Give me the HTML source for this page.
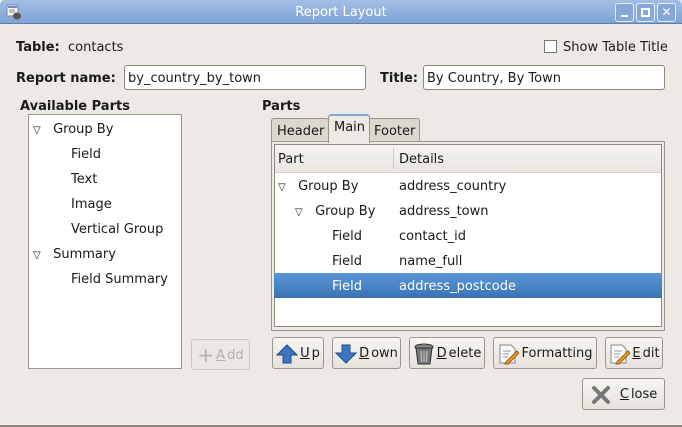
<!DOCTYPE html>
<html><head><meta charset="utf-8"><style>
*{box-sizing:border-box;margin:0;padding:0}
body{width:682px;height:427px;overflow:hidden;background:#edeae5;font-family:"DejaVu Sans","Liberation Sans",sans-serif;font-size:13px;color:#1a1a1a;position:relative}
.a{position:absolute;white-space:nowrap}
.tb{left:0;top:0;width:682px;height:24px;background:linear-gradient(#a2bfe6,#7fa3d6);border-bottom:1px solid #5f7fae;border-radius:5px 5px 0 0}
.b{font-weight:bold}
.t{font-size:10px}
.entry{background:#fff;border:1px solid #8d877c;border-radius:3px;height:25px;padding:5px 3px;line-height:15px}
.btn{border:1px solid #9b968c;border-radius:3px;background:linear-gradient(#f7f6f3,#e6e2dc);height:32px;display:flex;align-items:center;justify-content:center;gap:2px;padding-top:1px}
.btn u{text-decoration:underline}
.wb{width:19px;height:19px;border:1px solid #e5edf8;border-radius:3px;top:3px;background:#86a8d9}
</style></head><body>
<div class="a tb"></div>
<svg class="a" style="left:6px;top:4px" width="16" height="16"><rect x="1" y="1" width="11" height="11" fill="#f5f5f5" stroke="#7a8aa0"/><rect x="2" y="2" width="9" height="2" fill="#6b8fc4"/><line x1="3" y1="6" x2="9" y2="6" stroke="#888"/><line x1="3" y1="8" x2="9" y2="8" stroke="#888"/><ellipse cx="11" cy="12" rx="4" ry="3.5" fill="#555"/></svg>
<div class="a" style="left:0;width:682px;top:5px;text-align:center;color:#fff;font-size:13px">Report Layout</div>
<div class="a wb" style="left:615px"><div style="position:absolute;left:5px;top:11px;width:7px;height:2px;background:#fff"></div></div>
<div class="a wb" style="left:636px"><div style="position:absolute;left:4px;top:4px;width:9px;height:9px;border:2px solid #fff"></div></div>
<div class="a wb" style="left:657px;color:#fff;font-size:12px;font-weight:bold;text-align:center;line-height:17px">✕</div>

<div class="a" style="left:16px;top:40px"><span class="b">Table:</span>&nbsp; contacts</div>
<div class="a" style="left:544px;top:40px;width:13px;height:13px;border:1px solid #777;background:#fff"></div>
<div class="a" style="left:563px;top:40px">Show Table Title</div>

<div class="a b" style="left:16px;top:71px">Report name:</div>
<div class="a entry" style="left:124px;top:65px;width:242px">by_country_by_town</div>
<div class="a b" style="left:380px;top:71px">Title:</div>
<div class="a entry" style="left:423px;top:65px;width:242px">By Country, By Town</div>

<div class="a b" style="left:20px;top:99px">Available Parts</div>
<div class="a" style="left:28px;top:114px;width:154px;height:255px;background:#fff;border:1px solid #9b968c"></div>
<div class="a" style="left:33px;top:122px"><span class="t">▽</span>&nbsp;&nbsp;&nbsp;Group By</div>
<div class="a" style="left:71px;top:147px">Field</div>
<div class="a" style="left:71px;top:172px">Text</div>
<div class="a" style="left:71px;top:197px">Image</div>
<div class="a" style="left:71px;top:222px">Vertical Group</div>
<div class="a" style="left:33px;top:247px"><span class="t">▽</span>&nbsp;&nbsp;&nbsp;Summary</div>
<div class="a" style="left:71px;top:272px">Field Summary</div>

<div class="a btn" style="left:191px;top:339px;width:59px;height:31px;color:#b5b1aa;border-color:#cdc9c2;background:#ebe8e3"><span style="font-size:20px;line-height:14px">+</span><u>A</u>dd</div>

<div class="a b" style="left:262px;top:99px">Parts</div>
<div class="a" style="left:271px;top:118px;width:58px;height:24px;border:1px solid #9b968c;border-bottom:none;border-radius:3px 3px 0 0;background:#dcd8d0;padding:5px 5px">Header</div>
<div class="a" style="left:369px;top:118px;width:51px;height:24px;border:1px solid #9b968c;border-bottom:none;border-radius:0 3px 0 0;background:#dcd8d0;padding:5px 4px">Footer</div>
<div class="a" style="left:271px;top:141px;width:394px;height:190px;border:1px solid #9b968c;background:#edeae5"></div>
<div class="a" style="left:328px;top:114px;width:42px;height:29px;border:1px solid #9b968c;border-top:2px solid #7ea6d8;border-bottom:none;border-radius:3px 3px 0 0;background:#edeae5;padding:4px 5px">Main</div>
<div class="a" style="left:274px;top:144px;width:388px;height:183px;background:#fff;border:1px solid #8d877c"></div>
<div class="a" style="left:275px;top:145px;width:386px;height:28px;background:linear-gradient(#f5f4f1,#e9e6e0);border-bottom:1px solid #d4d0c8"></div>
<div class="a" style="left:393px;top:148px;width:1px;height:21px;background:#cfcbc3"></div>
<div class="a" style="left:278px;top:152px">Part</div>
<div class="a" style="left:399px;top:152px">Details</div>
<div class="a" style="left:278px;top:179px"><span class="t">▽</span>&nbsp;&nbsp;&nbsp;Group By</div><div class="a" style="left:399px;top:179px">address_country</div>
<div class="a" style="left:295px;top:204px"><span class="t">▽</span>&nbsp;&nbsp;&nbsp;Group By</div><div class="a" style="left:399px;top:204px">address_town</div>
<div class="a" style="left:332px;top:229px">Field</div><div class="a" style="left:399px;top:229px">contact_id</div>
<div class="a" style="left:332px;top:254px">Field</div><div class="a" style="left:399px;top:254px">name_full</div>
<div class="a" style="left:274px;top:273px;width:388px;height:25px;background:linear-gradient(#5b97d6,#3a73b3)"></div>
<div class="a" style="left:332px;top:279px;color:#fff">Field</div><div class="a" style="left:399px;top:279px;color:#fff">address_postcode</div>

<div class="a btn" style="left:272px;top:337px;width:52px"><svg width="22" height="22"><path d="M11 2 L21 12 L15 12 L15 20 L7 20 L7 12 L1 12 Z" fill="#3d77c2" stroke="#204a87"/></svg><u>U</u>p</div>
<div class="a btn" style="left:332px;top:337px;width:69px"><svg width="22" height="22"><path d="M11 20 L21 10 L15 10 L15 2 L7 2 L7 10 L1 10 Z" fill="#3d77c2" stroke="#204a87"/></svg><u>D</u>own</div>
<div class="a btn" style="left:409px;top:337px;width:76px"><svg width="22" height="24"><ellipse cx="11" cy="5" rx="9" ry="3" fill="#888" stroke="#333"/><path d="M3 6 L5 22 L17 22 L19 6Z" fill="#777" stroke="#333"/><line x1="8" y1="9" x2="8.5" y2="20" stroke="#ccc"/><line x1="11" y1="9" x2="11" y2="20" stroke="#ccc"/><line x1="14" y1="9" x2="13.5" y2="20" stroke="#ccc"/></svg><u>D</u>elete</div>
<div class="a btn" style="left:493px;top:337px;width:104px"><svg width="22" height="22"><path d="M3 2 H14 L18 6 V20 H3Z" fill="#fafafa" stroke="#888"/><line x1="6" y1="8" x2="14" y2="8" stroke="#999"/><line x1="6" y1="11" x2="12" y2="11" stroke="#999"/><line x1="6" y1="14" x2="11" y2="14" stroke="#999"/><path d="M9 19 L20 8 L22 10 L11 21 L8 21Z" fill="#f0a030" stroke="#a05a00"/></svg>Formatting</div>
<div class="a btn" style="left:605px;top:337px;width:58px"><svg width="22" height="22"><path d="M3 2 H14 L18 6 V20 H3Z" fill="#fafafa" stroke="#888"/><line x1="6" y1="8" x2="14" y2="8" stroke="#999"/><line x1="6" y1="11" x2="12" y2="11" stroke="#999"/><line x1="6" y1="14" x2="11" y2="14" stroke="#999"/><path d="M9 19 L20 8 L22 10 L11 21 L8 21Z" fill="#f0a030" stroke="#a05a00"/></svg><u>E</u>dit</div>
<div class="a btn" style="left:582px;top:378px;width:83px"><svg width="22" height="22"><path d="M4 4 L18 18 M18 4 L4 18" stroke="#777" stroke-width="4" stroke-linecap="round"/></svg>&nbsp;<u>C</u>lose</div>
<div class="a" style="left:0;top:425px;width:682px;height:2px;background:#8d877c"></div>
</body></html>
